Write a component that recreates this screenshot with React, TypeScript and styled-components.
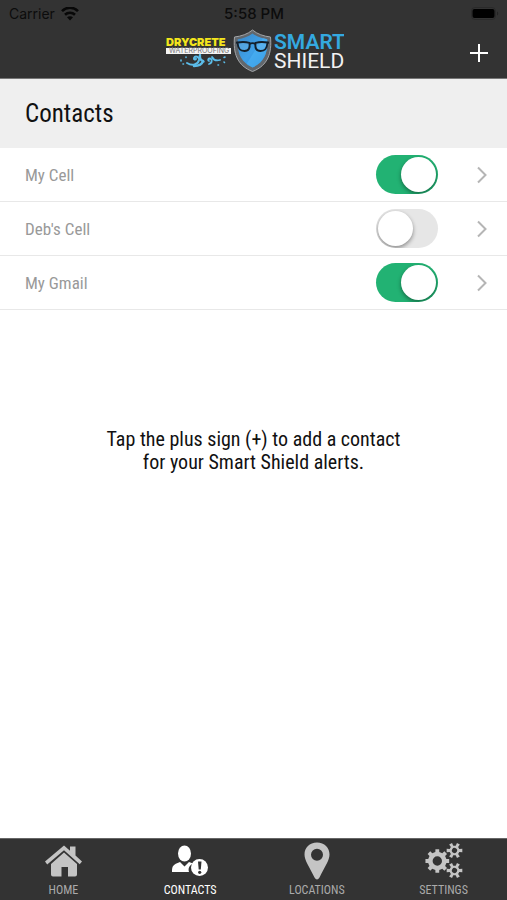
import React, { useState } from "react";
import styled, { createGlobalStyle } from "styled-components";

const GlobalStyle = createGlobalStyle`
  *, *::before, *::after { box-sizing: border-box; }
  body {
    margin: 0;
    background: #fff;
    font-family: "Roboto Condensed", "Liberation Sans Narrow", "Roboto", sans-serif;
    color: #111;
  }
  button, input { font: inherit; margin: 0; padding: 0; border: 0; }
`;

const Screen = styled.div`
  display: flex;
  flex-direction: column;
  min-height: 100vh;
`;

const Header = styled.header`
  background: #333;
  border-bottom: 1px solid #777;
`;

const StatusBar = styled.div`
  display: grid;
  grid-template-columns: 1fr auto 1fr;
  align-items: center;
  height: 27px;
  padding: 0 8px 0 9px;
  font-family: "Inter", sans-serif;
  font-size: 14px;
  line-height: 16px;
  color: #0c0c0c;
`;

const Carrier = styled.div`
  display: flex;
  align-items: center;
  gap: 6px;
`;

const Clock = styled.time`
  font-size: 15px;
  font-weight: 500;
`;

const BatterySlot = styled.div`
  display: flex;
  justify-content: flex-end;
`;

const NavBar = styled.div`
  display: grid;
  grid-template-columns: 1fr auto 1fr;
  align-items: center;
  height: 51px;
  padding: 0 18px;
`;

const LogoSlot = styled.div`
  grid-column: 2;
  display: flex;
`;

const AddButton = styled.button`
  display: flex;
  justify-self: end;
  background: none;
  color: #fff;
  cursor: pointer;
`;

const Title = styled.h1`
  margin: 0;
  padding: 20px 25px;
  background: #efefef;
  font-size: 25px;
  line-height: 29px;
  font-weight: 400;
`;

const List = styled.ul`
  margin: 0;
  padding: 0;
  list-style: none;
`;

const Row = styled.li`
  display: flex;
  align-items: center;
  height: 54px;
  padding: 0 18px 0 25px;
  border-bottom: 1px solid #e8e8e8;
`;

const RowLabel = styled.label`
  flex: 1;
  font-size: 17px;
  line-height: 24px;
  color: #999;
`;

const Toggle = styled.input`
  appearance: none;
  display: flex;
  align-items: center;
  width: 62px;
  height: 39px;
  margin-right: 37px;
  padding: 2px;
  border-radius: 20px;
  background: #e6e6e6;
  overflow: hidden;
  cursor: pointer;

  &::before {
    content: "";
    width: 35px;
    height: 35px;
    border-radius: 50%;
    background: #fff;
    box-shadow: 0 2px 4px rgba(0, 0, 0, 0.4);
  }

  &:checked {
    justify-content: flex-end;
    background: #22b273;
  }
`;

const DetailButton = styled.button`
  display: flex;
  background: none;
  cursor: pointer;
`;

const Main = styled.main`
  flex: 1;
`;

const Hint = styled.p`
  max-width: 320px;
  margin: 118px auto 0;
  font-size: 20px;
  line-height: 23px;
  text-align: center;
`;

const TabBar = styled.nav`
  display: grid;
  grid-template-columns: repeat(4, 1fr);
  height: 62px;
  background: #333;
  border-top: 1px solid #666;
`;

const Tab = styled.a<{ $active: boolean }>`
  display: flex;
  flex-direction: column;
  align-items: center;
  gap: 1px;
  padding-top: 2px;
  color: ${(p) => (p.$active ? "#fff" : "#c4c4c4")};
  font-size: 12px;
  line-height: 16px;
  text-decoration: none;
`;

const TabLabel = styled.span<{ $active: boolean }>`
  color: ${(p) => (p.$active ? "#fff" : "#aaa")};
`;

const WifiIcon = () => (
  <svg width="18" height="14" viewBox="0 0 18 14" fill="none" stroke="#080808" strokeWidth="2.6" aria-hidden="true">
    <path d="M1 4.200C5.400-.4 12.600-.4 17 4.200" />
    <path d="M4 7.800c2.800-2.700 7.200-2.700 10 0" />
    <path d="M9 13.500 6 10.300c1.700-1.500 4.300-1.500 6 0z" fill="#080808" stroke="none" />
  </svg>
);

const BatteryIcon = () => (
  <svg width="28" height="13" viewBox="0 0 28 13" aria-hidden="true">
    <rect x="0.5" y="0.5" width="24" height="12" rx="3.5" fill="none" stroke="#2a2a2a" />
    <rect x="1.500" y="2" width="22" height="9" rx="2" fill="#000" />
    <path d="M26 4.500c1.600.6 1.600 3.400 0 4z" fill="#242424" />
  </svg>
);

const PlusIcon = () => (
  <svg width="20" height="20" viewBox="0 0 20 20" stroke="currentColor" strokeWidth="2" aria-hidden="true">
    <path d="M10 1v18M1 10h18" />
  </svg>
);

const ChevronIcon = () => (
  <svg width="14" height="18" viewBox="0 0 14 18" fill="none" stroke="#b5b5b5" strokeWidth="2" aria-hidden="true">
    <path d="M3 1.500 10.500 9 3 16.500" />
  </svg>
);

const Logo = () => (
  <svg width="180" height="48" viewBox="0 0 180 48" role="img" aria-label="Drycrete Waterproofing Smart Shield">
    <defs>
      <linearGradient id="shieldFill" x1="0" y1="0" x2="1" y2="1">
        <stop offset="0" stopColor="#3a86c4" />
        <stop offset="0.5" stopColor="#3fa0e8" />
        <stop offset="1" stopColor="#2387d4" />
      </linearGradient>
    </defs>
    <text x="2" y="17" fontFamily="Inter" fontSize="11" fontWeight="900" fill="#f3e51c">DRYCRETE</text>
    <rect x="2" y="19" width="65" height="6" fill="#f4f4f4" />
    <text x="5" y="24" fontFamily="Inter" fontSize="7" fill="#777">WATERPROOFING</text>
    <g fill="none" stroke="#5bbce8" strokeLinecap="round">
      <path d="M23 34c5 3 11 2 12-3 .6-3.500-4-4.500-5-2-.4 1.600 1.500 2 2 .8" strokeWidth="2" />
      <path d="M36 26c-.5 3 1 5.500 3.500 6.500M30 37c4 0 8-1.500 9-5" strokeWidth="2.400" />
      <path d="M45 35c3.500-1 3.500-5.500.5-5.500-1.500.2-1.800 2-.5 2.500M48 28c1.500 3 4.500 4 8 3" strokeWidth="1.800" />
      <path d="M17 31v1M22 28v.5M54 36h.5M60 33l.5.5M61 28l-1 .5M19 35h.5" strokeWidth="1.600" />
    </g>
    <path d="M88.500 1c5 4.200 11 6.200 18 7 1.500 16-2.500 28.500-18 34.500C73 36.500 69 24 70.500 8c7-.8 13-2.800 18-7z" fill="#62676c" stroke="#a4a6a9" />
    <path d="M88.500 4.500c4.500 3.300 9.500 5 14.700 5.800.8 13.700-2.700 22.700-14.700 28.200C76.500 33 73 24 73.800 10.300 79 9.500 84 7.800 88.500 4.500z" fill="url(#shieldFill)" />
    <path d="M99 9l4.200 1.300c.8 13.700-2.700 22.700-14.700 28.200l-6-3.500z" fill="#4fb6f7" opacity="0.55" />
    <g fill="#7cc0ee" fillOpacity="0.35" stroke="#14202b" strokeWidth="1.900" strokeLinejoin="round">
      <path d="M73.500 13.500c4-.8 8-.8 12 .3.600 5-.4 8.200-5 8.200-4.800 0-6.500-2.500-7-8.500z" />
      <path d="M103.500 13.500c-4-.8-8-.8-12 .3-.6 5 .4 8.200 5 8.200 4.800 0 6.500-2.500 7-8.500z" />
      <path d="M85.500 15c2-1.200 4-1.200 6 0M72 13.300l2 .7M105 13.300l-2 .7" fill="none" />
    </g>
    <text x="110" y="20" fontFamily="Roboto" fontSize="21" fontWeight="600" fill="#34a9e0">SMART</text>
    <text x="110" y="39" fontFamily="Roboto" fontSize="21" fill="#f2f2f2">SHIELD</text>
  </svg>
);

const HomeIcon = () => (
  <svg width="38" height="40" viewBox="0 0 38 40" fill="currentColor" aria-hidden="true">
    <path d="M1 20.500 20 4.500l6 5.200V5.500h5.500v9L38 20.500 35.700 23.200 20 9.300 3.200 23.500z" />
    <path d="M20 11.500 33 23v10.500q0 2-2 2H24V26h-6.500v9.500H9Q7 35.500 7 33.500V23z" />
  </svg>
);

const ContactsIcon = () => (
  <svg width="38" height="40" viewBox="0 0 38 40" aria-hidden="true">
    <ellipse cx="13.500" cy="12.500" rx="6.500" ry="8" fill="currentColor" />
    <path d="M1 31c0-6 1-7.500 8-10l4.500 4.500L18 21l4 1.500c-4 2-5 5-4 8.500z" fill="currentColor" />
    <circle cx="28.500" cy="26.500" r="8.500" fill="currentColor" />
    <path d="M27 20.500h3.500l-.7 8h-2.100z" fill="#333" />
    <circle cx="28.700" cy="31.300" r="1.600" fill="#333" />
  </svg>
);

const PinIcon = () => (
  <svg width="38" height="40" viewBox="0 0 38 40" fill="currentColor" fillRule="evenodd" aria-hidden="true">
    <path d="M19 1.500c7.500 0 12.500 5 12.500 12 0 6-4.500 11.500-10 23q-2.500 4-5 0c-5.500-11.500-10-17-10-23 0-7 5-12 12.500-12zM19 7.700a6 6 0 1 0 0 12 6 6 0 0 0 0-12z" />
  </svg>
);

const gearPath = (cx: number, cy: number, outer: number, root: number, hole: number, teeth: number) => {
  const step = (Math.PI * 2) / teeth;
  const points: string[] = [];
  for (let i = 0; i < teeth; i++) {
    const mid = i * step - Math.PI / 2;
    const corners: [number, number][] = [
      [root, -0.27],
      [outer, -0.2],
      [outer, 0.2],
      [root, 0.27],
    ];
    for (const [radius, offset] of corners) {
      const angle = mid + offset * step;
      points.push(`${(cx + radius * Math.cos(angle)).toFixed(2)} ${(cy + radius * Math.sin(angle)).toFixed(2)}`);
    }
  }
  return `M${points.join("L")}ZM${cx - hole} ${cy}a${hole} ${hole} 0 1 0 ${hole * 2} 0a${hole} ${hole} 0 1 0 ${-hole * 2} 0Z`;
};

const SettingsIcon = () => (
  <svg width="38" height="40" viewBox="0 0 38 40" fill="currentColor" fillRule="evenodd" aria-hidden="true">
    <path d={gearPath(12.3, 20, 12, 9.3, 4.7, 8)} />
    <path d={gearPath(29.5, 9.5, 8, 5, 2.6, 6)} transform="rotate(30 29.500 9.500)" />
    <path d={gearPath(29.5, 29.5, 8, 5, 2.6, 6)} transform="rotate(30 29.500 29.500)" />
  </svg>
);

const initialContacts = [
  { id: "my-cell", name: "My Cell", enabled: true },
  { id: "debs-cell", name: "Deb's Cell", enabled: false },
  { id: "my-gmail", name: "My Gmail", enabled: true },
];

const tabs = [
  { label: "HOME", Icon: HomeIcon },
  { label: "CONTACTS", Icon: ContactsIcon },
  { label: "LOCATIONS", Icon: PinIcon },
  { label: "SETTINGS", Icon: SettingsIcon },
];

export default function App() {
  const [contacts, setContacts] = useState(initialContacts);
  const toggle = (id: string) =>
    setContacts((list) => list.map((c) => (c.id === id ? { ...c, enabled: !c.enabled } : c)));

  return (
    <Screen>
      <GlobalStyle />
      <Header>
        <StatusBar>
          <Carrier>
            Carrier
            <WifiIcon />
          </Carrier>
          <Clock>5:58 PM</Clock>
          <BatterySlot>
            <BatteryIcon />
          </BatterySlot>
        </StatusBar>
        <NavBar>
          <LogoSlot>
            <Logo />
          </LogoSlot>
          <AddButton type="button" aria-label="Add contact">
            <PlusIcon />
          </AddButton>
        </NavBar>
      </Header>
      <Main>
        <Title>Contacts</Title>
        <List>
          {contacts.map((c) => (
            <Row key={c.id}>
              <RowLabel htmlFor={c.id}>{c.name}</RowLabel>
              <Toggle id={c.id} type="checkbox" checked={c.enabled} onChange={() => toggle(c.id)} />
              <DetailButton type="button" aria-label={`Open ${c.name}`}>
                <ChevronIcon />
              </DetailButton>
            </Row>
          ))}
        </List>
        <Hint>
          Tap the plus sign (+) to add a contact
          <br />
          for your Smart Shield alerts.
        </Hint>
      </Main>
      <TabBar>
        {tabs.map(({ label, Icon }) => {
          const active = label === "CONTACTS";
          return (
            <Tab key={label} href={`#${label.toLowerCase()}`} $active={active} aria-current={active ? "page" : undefined}>
              <Icon />
              <TabLabel $active={active}>{label}</TabLabel>
            </Tab>
          );
        })}
      </TabBar>
    </Screen>
  );
}
